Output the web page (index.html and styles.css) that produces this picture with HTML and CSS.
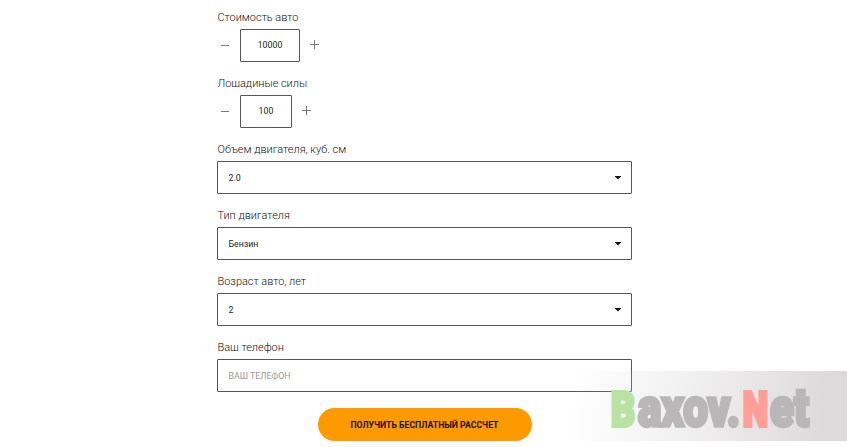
FILE: index.html
```html
<!DOCTYPE html>
<html lang="ru">
<head>
<meta charset="utf-8">
<title>Расчет</title>
<link rel="stylesheet" href="styles.css">
</head>
<body>
<form class="form">
  <div class="group"><div class="label"><span>Стоимость авто</span></div>
    <div class="stepper"><i class="sign minus"></i><div class="box count wide">10000</div><i class="sign plus"></i></div></div>
  <div class="group"><div class="label"><span>Лошадиные силы</span></div>
    <div class="stepper"><i class="sign minus"></i><div class="box count">100</div><i class="sign plus"></i></div></div>
  <div class="group"><div class="label"><span>Объем двигателя, куб. см</span></div>
    <div class="box select"><span>2.0</span><i class="caret"></i></div></div>
  <div class="group"><div class="label"><span>Тип двигателя</span></div>
    <div class="box select"><span>Бензин</span><i class="caret"></i></div></div>
  <div class="group"><div class="label"><span>Возраст авто, лет</span></div>
    <div class="box select"><span>2</span><i class="caret"></i></div></div>
  <div class="group"><div class="label"><span>Ваш телефон</span></div>
    <div class="box select hint"><span>ВАШ ТЕЛЕФОН</span></div></div>
  <button class="submit" type="button">ПОЛУЧИТЬ БЕСПЛАТНЫЙ РАССЧЕТ</button>
</form>
<div class="watermark">
  <svg width="287" height="70" viewBox="560 371 287 70">
    <text class="mark"><tspan class="cap green" x="611" y="426" textLength="24" lengthAdjust="spacingAndGlyphs">B</tspan><tspan class="low" x="638" y="426" textLength="102" lengthAdjust="spacingAndGlyphs">axov.</tspan><tspan class="cap red" x="743" y="426" textLength="25" lengthAdjust="spacingAndGlyphs">N</tspan><tspan class="low" x="770" y="426" textLength="39" lengthAdjust="spacingAndGlyphs">et</tspan></text>
  </svg>
</div>
</body>
</html>
```
FILE: styles.css
```css
* { box-sizing: border-box; }
body { margin: 0; height: 447px; overflow: hidden; background: #fff; font-family: Roboto, sans-serif; color: #222; position: relative; }
.form { width: 415px; margin: 0 0 0 217px; padding-top: 7px; display: flex; flex-direction: column; }
.group { height: 66px; }
.label { height: 22px; line-height: 21px; padding-left: .5px; font-size: 10.95px; font-weight: 300; color: #111; white-space: nowrap; }
.box { height: 33px; border: 1px solid #555; border-radius: 1px; font-size: 8.8px; line-height: 10px; padding-bottom: 1px; display: flex; align-items: center; }
.stepper { display: flex; align-items: center; }
.count { width: 52px; justify-content: center; }
.wide { width: 60px; }
.sign { width: 8px; height: 9px; flex: none; }
.minus { margin: -1px 11px 0 4px; width: 8px; height: 1px; background: #777; }
.plus { margin: -3px 0 0 10px; width: 9px; background: linear-gradient(#777, #777) center / 9px 1px no-repeat, linear-gradient(#777, #777) center / 1px 9px no-repeat; }
.select { justify-content: space-between; padding: 0 10px 0 10.5px; }
.caret { width: 6px; height: 4px; background: #111; clip-path: polygon(0 0, 100% 0, 100% 25%, 50% 100%, 0 25%); }
.hint { color: #999; }
.submit { align-self: center; margin: 5px 0 0; width: 214px; height: 33px; border: 0; border-radius: 17px; background: #ff9900; color: #1d1400; font: 700 8.7px Roboto, sans-serif; padding: 0; white-space: nowrap; }
.watermark { position: absolute; left: 560px; top: 371px; width: 287px; height: 70px; background: linear-gradient(97deg, rgba(215,212,212,0) 5%, rgba(215,212,212,.4) 50%, rgba(215,212,212,.85) 90%); }
.watermark svg { display: block; }
.mark { font-family: Roboto, sans-serif; font-weight: 900; fill: #b9b7b7; stroke: #b9b7b7; stroke-width: 4px; stroke-linejoin: miter; }
.cap { font-size: 49px; }
.low { font-size: 53px; stroke-width: 3.5px; }
.green { fill: #b9e2a3; stroke: #b9e2a3; }
.red { fill: #fd9f98; stroke: #fd9f98; }
```
